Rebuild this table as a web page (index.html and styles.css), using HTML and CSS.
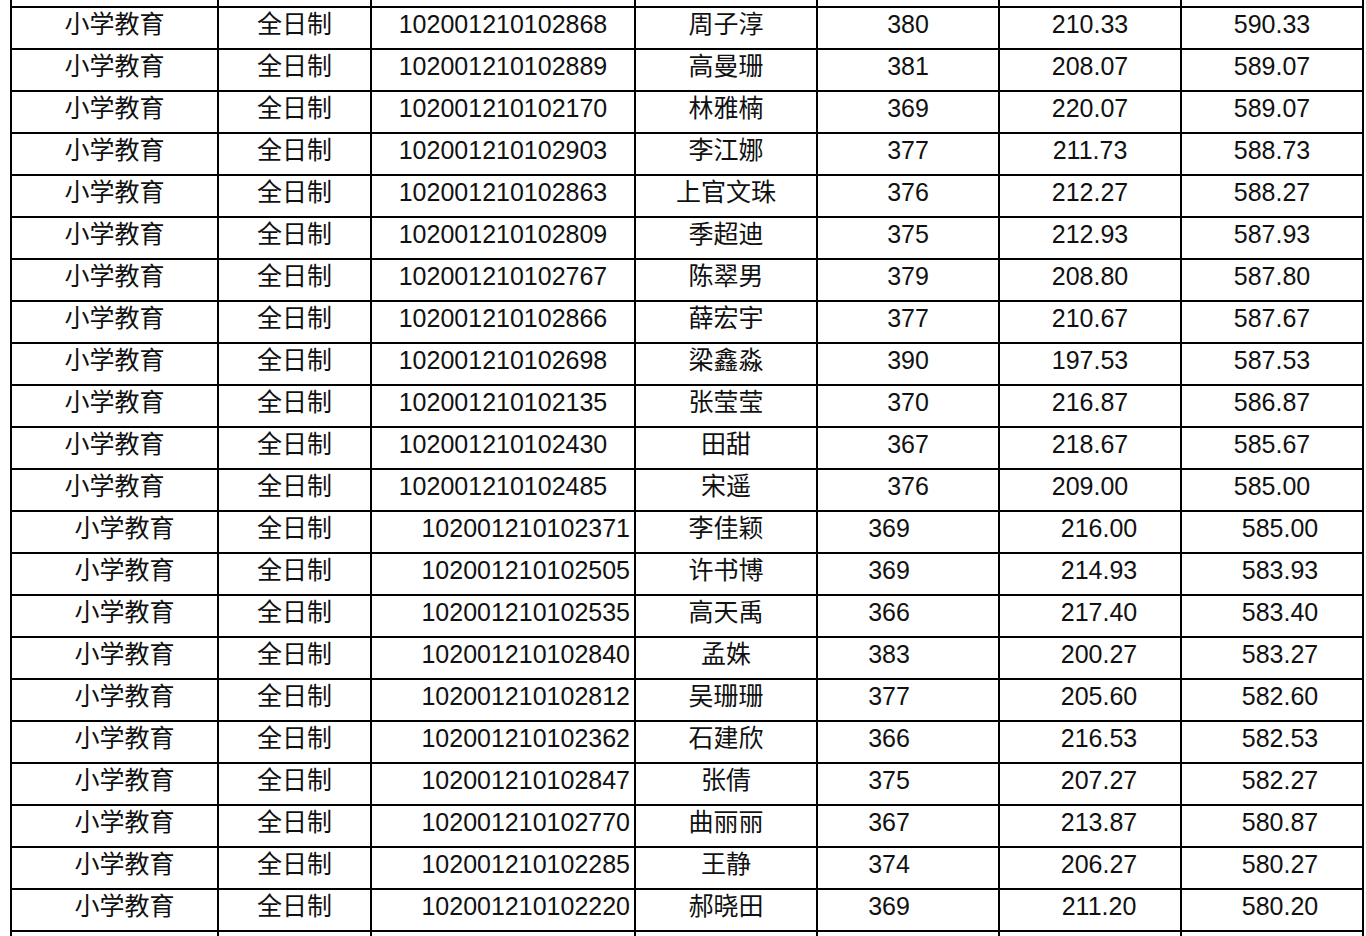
FILE: index.html
```html
<!DOCTYPE html>
<html lang="zh-CN">
<head>
<meta charset="utf-8">
<title>成绩表</title>
<link rel="stylesheet" href="styles.css">
</head>
<body>
<div class="sheet">
  <div class="cell top"></div><div class="cell top"></div><div class="cell top"></div><div class="cell top"></div><div class="cell top"></div><div class="cell top"></div><div class="cell top"></div>

  <div class="cell">小学教育</div><div class="cell">全日制</div><div class="cell">102001210102868</div><div class="cell">周子淳</div><div class="cell">380</div><div class="cell">210.33</div><div class="cell">590.33</div>
  <div class="cell">小学教育</div><div class="cell">全日制</div><div class="cell">102001210102889</div><div class="cell">高曼珊</div><div class="cell">381</div><div class="cell">208.07</div><div class="cell">589.07</div>
  <div class="cell">小学教育</div><div class="cell">全日制</div><div class="cell">102001210102170</div><div class="cell">林雅楠</div><div class="cell">369</div><div class="cell">220.07</div><div class="cell">589.07</div>
  <div class="cell">小学教育</div><div class="cell">全日制</div><div class="cell">102001210102903</div><div class="cell">李江娜</div><div class="cell">377</div><div class="cell">211.73</div><div class="cell">588.73</div>
  <div class="cell">小学教育</div><div class="cell">全日制</div><div class="cell">102001210102863</div><div class="cell">上官文珠</div><div class="cell">376</div><div class="cell">212.27</div><div class="cell">588.27</div>
  <div class="cell">小学教育</div><div class="cell">全日制</div><div class="cell">102001210102809</div><div class="cell">季超迪</div><div class="cell">375</div><div class="cell">212.93</div><div class="cell">587.93</div>
  <div class="cell">小学教育</div><div class="cell">全日制</div><div class="cell">102001210102767</div><div class="cell">陈翠男</div><div class="cell">379</div><div class="cell">208.80</div><div class="cell">587.80</div>
  <div class="cell">小学教育</div><div class="cell">全日制</div><div class="cell">102001210102866</div><div class="cell">薛宏宇</div><div class="cell">377</div><div class="cell">210.67</div><div class="cell">587.67</div>
  <div class="cell">小学教育</div><div class="cell">全日制</div><div class="cell">102001210102698</div><div class="cell">梁鑫淼</div><div class="cell">390</div><div class="cell">197.53</div><div class="cell">587.53</div>
  <div class="cell">小学教育</div><div class="cell">全日制</div><div class="cell">102001210102135</div><div class="cell">张莹莹</div><div class="cell">370</div><div class="cell">216.87</div><div class="cell">586.87</div>
  <div class="cell">小学教育</div><div class="cell">全日制</div><div class="cell">102001210102430</div><div class="cell">田甜</div><div class="cell">367</div><div class="cell">218.67</div><div class="cell">585.67</div>
  <div class="cell">小学教育</div><div class="cell">全日制</div><div class="cell">102001210102485</div><div class="cell">宋遥</div><div class="cell">376</div><div class="cell">209.00</div><div class="cell">585.00</div>

  <div class="cell b-major">小学教育</div><div class="cell">全日制</div><div class="cell b-id">102001210102371</div><div class="cell">李佳颖</div><div class="cell b-s1">369</div><div class="cell b-s2">216.00</div><div class="cell b-tot">585.00</div>
  <div class="cell b-major">小学教育</div><div class="cell">全日制</div><div class="cell b-id">102001210102505</div><div class="cell">许书博</div><div class="cell b-s1">369</div><div class="cell b-s2">214.93</div><div class="cell b-tot">583.93</div>
  <div class="cell b-major">小学教育</div><div class="cell">全日制</div><div class="cell b-id">102001210102535</div><div class="cell">高天禹</div><div class="cell b-s1">366</div><div class="cell b-s2">217.40</div><div class="cell b-tot">583.40</div>
  <div class="cell b-major">小学教育</div><div class="cell">全日制</div><div class="cell b-id">102001210102840</div><div class="cell">孟姝</div><div class="cell b-s1">383</div><div class="cell b-s2">200.27</div><div class="cell b-tot">583.27</div>
  <div class="cell b-major">小学教育</div><div class="cell">全日制</div><div class="cell b-id">102001210102812</div><div class="cell">吴珊珊</div><div class="cell b-s1">377</div><div class="cell b-s2">205.60</div><div class="cell b-tot">582.60</div>
  <div class="cell b-major">小学教育</div><div class="cell">全日制</div><div class="cell b-id">102001210102362</div><div class="cell">石建欣</div><div class="cell b-s1">366</div><div class="cell b-s2">216.53</div><div class="cell b-tot">582.53</div>
  <div class="cell b-major">小学教育</div><div class="cell">全日制</div><div class="cell b-id">102001210102847</div><div class="cell">张倩</div><div class="cell b-s1">375</div><div class="cell b-s2">207.27</div><div class="cell b-tot">582.27</div>
  <div class="cell b-major">小学教育</div><div class="cell">全日制</div><div class="cell b-id">102001210102770</div><div class="cell">曲丽丽</div><div class="cell b-s1">367</div><div class="cell b-s2">213.87</div><div class="cell b-tot">580.87</div>
  <div class="cell b-major">小学教育</div><div class="cell">全日制</div><div class="cell b-id">102001210102285</div><div class="cell">王静</div><div class="cell b-s1">374</div><div class="cell b-s2">206.27</div><div class="cell b-tot">580.27</div>
  <div class="cell b-major">小学教育</div><div class="cell">全日制</div><div class="cell b-id">102001210102220</div><div class="cell">郝晓田</div><div class="cell b-s1">369</div><div class="cell b-s2">211.20</div><div class="cell b-tot">580.20</div>

  <div class="cell tail"></div><div class="cell tail"></div><div class="cell tail"></div><div class="cell tail"></div><div class="cell tail"></div><div class="cell tail"></div><div class="cell tail"></div>
</div>
</body>
</html>
```

FILE: styles.css
```css
html, body {
  margin: 0;
  padding: 0;
  background: #ffffff;
  overflow: hidden;
}

body {
  width: 1366px;
  height: 936px;
}

.sheet {
  display: grid;
  grid-template-columns: 207px 153px 264px 182px 182px 182px 182px;
  width: max-content;
  margin-left: 10px;
  border-left: 2px solid #000;
  font-family: "Liberation Sans", "Noto Sans CJK SC", sans-serif;
  font-size: 25px;
  line-height: 29px;
  color: #111;
}

.cell {
  box-sizing: border-box;
  height: 42px;
  border-right: 2px solid #000;
  border-bottom: 2px solid #000;
  display: flex;
  align-items: center;
  justify-content: center;
  padding-bottom: 7px;
  white-space: nowrap;
}

.cell.top {
  height: 8px;
  padding: 0;
}

.cell.tail {
  height: 10px;
  padding: 0;
  border-bottom: none;
}

.cell.b-major {
  padding-left: 20px;
}

.cell.b-id {
  justify-content: flex-end;
  padding-right: 4px;
}

.cell.b-s1 {
  padding-right: 38px;
}

.cell.b-s2 {
  padding-left: 18px;
}

.cell.b-tot {
  padding-left: 16px;
}
```
